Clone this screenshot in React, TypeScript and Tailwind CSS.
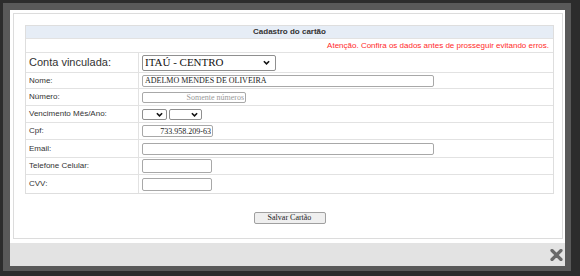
import React from "react";

const sans = { fontFamily: '"Liberation Sans", Arial, sans-serif' };
const serif = { fontFamily: '"Liberation Serif", "Times New Roman", serif' };

function Chevron({ className = "" }: { className?: string }) {
  return (
    <svg viewBox="0 0 8 5" className={className} width="7" height="5">
      <path d="M1 1 L4 4 L7 1" fill="none" stroke="#111" strokeWidth="1.8" />
    </svg>
  );
}

function Row({
  h,
  label,
  labelCls = "text-[8px]",
  last = false,
  children,
}: {
  h: string;
  label: string;
  labelCls?: string;
  last?: boolean;
  children?: React.ReactNode;
}) {
  return (
    <div className={`grid grid-cols-[113px_1fr] ${h} ${last ? "" : "border-b border-[#e2e2e2]"}`}>
      <div className={`flex items-center pl-[3px] border-r border-[#e2e2e2] text-[#333] ${labelCls}`}>{label}</div>
      <div className="flex items-center pl-[3px]">{children}</div>
    </div>
  );
}

const inputCls =
  "block border border-[#a8a8a8] rounded-[2px] bg-white text-[8px] text-[#222] outline-none px-[2px] leading-none";

export default function App() {
  return (
    <div className="w-[580px] h-[276px] bg-[#2c2c2c] pt-[3px] pl-[3px] overflow-hidden" style={sans}>
      <div className="w-[568px] h-[268px] bg-[#595959] pt-[7px] pl-[7px] pr-[6px] pb-[5px] flex flex-col">
        {/* white content */}
        <div className="bg-white h-[233px] pt-[3px] pl-[3px] pr-[2px]">
          <div className="border border-[#dcdcdc] h-[226px] pl-[11px] pt-[11px]">
            <div className="w-[529px] border border-[#dedede]">
              <div className="h-[13px] bg-[#e6edf6] border-b border-[#e2e2e2] flex items-center justify-center text-[8px] font-bold text-[#333]">
                Cadastro do cartão
              </div>
              <div className="h-[14px] border-b border-[#e2e2e2] flex items-center justify-end pr-[4px] text-[8px] text-[#ff2a2a]">
                Atenção. Confira os dados antes de prosseguir evitando erros.
              </div>
              <Row h="h-[20px]" label="Conta vinculada:" labelCls="text-[11px] text-[#111]">
                <div
                  className="w-[134px] h-[16px] border border-[#8f8f8f] rounded-[2px] flex items-center justify-between pl-[2px] pr-[5px] text-[11px] text-[#111]"
                  style={serif}
                >
                  <span>ITAÚ - CENTRO</span>
                  <Chevron />
                </div>
              </Row>
              <Row h="h-[16px]" label="Nome:">
                <input
                  readOnly
                  defaultValue="ADELMO MENDES DE OLIVEIRA"
                  className={`${inputCls} w-[292px] h-[12px] px-[1px]`}
                  style={serif}
                />
              </Row>
              <Row h="h-[17px]" label="Número:">
                <input
                  readOnly
                  placeholder="Somente números"
                  className={`${inputCls} w-[104px] h-[11px] text-right placeholder:text-[#9a9a9a] pr-[1px]`}
                  style={serif}
                />
              </Row>
              <Row h="h-[17px]" label="Vencimento Mês/Ano:">
                <div className="flex gap-[2px]">
                  <div className="w-[25px] h-[11px] border border-[#8f8f8f] rounded-[2px] flex items-center justify-end pr-[3px]">
                    <Chevron />
                  </div>
                  <div className="w-[33px] h-[11px] border border-[#8f8f8f] rounded-[2px] flex items-center justify-end pr-[3px]">
                    <Chevron />
                  </div>
                </div>
              </Row>
              <Row h="h-[17px]" label="Cpf:">
                <input
                  readOnly
                  defaultValue="733.958.209-63"
                  className={`${inputCls} w-[71px] h-[12px] text-right pr-[1px]`}
                  style={serif}
                />
              </Row>
              <Row h="h-[18px]" label="Email:">
                <input readOnly className={`${inputCls} w-[292px] h-[12px]`} style={serif} />
              </Row>
              <Row h="h-[17px]" label="Telefone Celular:">
                <input readOnly className={`${inputCls} w-[70px] h-[14px]`} style={serif} />
              </Row>
              <Row h="h-[18px]" label="CVV:" last>
                <input readOnly className={`${inputCls} w-[70px] h-[13px]`} style={serif} />
              </Row>
            </div>
            <div className="w-[529px] flex justify-center mt-[18px]">
              <button
                className="w-[72px] h-[12px] border border-[#a0a0a0] rounded-[2px] bg-[#efefef] text-[8px] text-[#222] leading-none flex items-center justify-center"
                style={serif}
              >
                Salvar Cartão
              </button>
            </div>
          </div>
        </div>
        {/* footer */}
        <div className="flex-1 bg-[#e3e3e3] flex items-center justify-end pr-[2px] pt-[1px]">
          <svg width="13" height="12" viewBox="0 0 13 12">
            <path d="M2 1.5 L11 10.5 M11 1.5 L2 10.5" stroke="#6a6a6a" strokeWidth="3.2" strokeLinecap="round" />
          </svg>
        </div>
      </div>
    </div>
  );
}
